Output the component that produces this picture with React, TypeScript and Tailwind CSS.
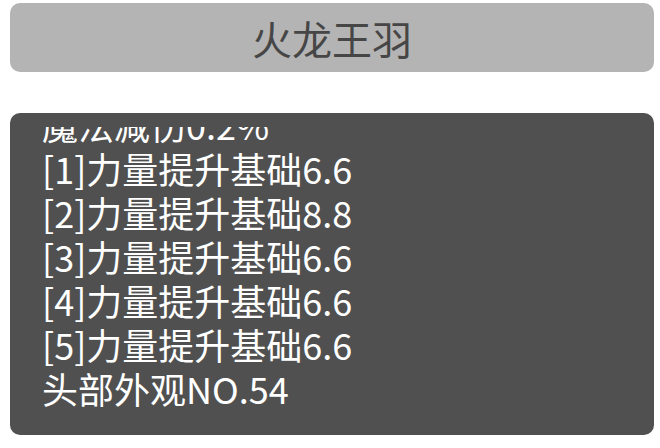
const lines = [
  "魔法减伤0.2%",
  "[1]力量提升基础6.6",
  "[2]力量提升基础8.8",
  "[3]力量提升基础6.6",
  "[4]力量提升基础6.6",
  "[5]力量提升基础6.6",
  "头部外观NO.54",
];

const font = {
  fontFamily: '"Noto Sans CJK SC", "Noto Sans", sans-serif',
};

export default function App() {
  return (
    <div className="h-[448px] w-[660px] bg-white pl-[10px] pr-[6px] pt-[3px]" style={font}>
      {/* item name header */}
      <div className="flex h-[69px] items-center justify-center rounded-[10px] bg-[#b4b4b4] text-[40px] leading-none text-[#464646]">
        火龙王羽
      </div>

      {/* attribute list, scrolled so the first row is half hidden */}
      <div className="mt-[41px] h-[322px] rounded-[10px] bg-[#505050] pt-[14px]">
        <div className="h-full overflow-hidden">
          <div className="-mt-[25px] flex flex-col pl-[32px] text-[36px] leading-[44px] text-white">
            {lines.map((line) => (
              <div key={line} className="whitespace-nowrap">
                {line}
              </div>
            ))}
          </div>
        </div>
      </div>
    </div>
  );
}
